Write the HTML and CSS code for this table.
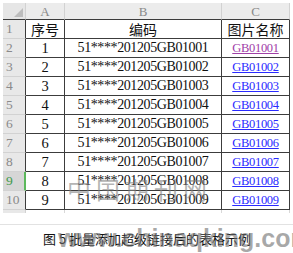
FILE: index.html
```html
<!DOCTYPE html>
<html lang="zh">
<head>
<meta charset="utf-8">
<link rel="stylesheet" href="styles.css">
</head>
<body>
<div class="page">
  <div class="sheet">
    <div class="corner"><svg width="9" height="9" viewBox="0 0 9 9"><polygon points="9,0 9,9 0,9" fill="#bdbdbd"/></svg></div>
    <div class="colh">A</div>
    <div class="colh">B</div>
    <div class="colh last">C</div>

    <div class="rowh">1</div><div class="cell cjk">序号</div><div class="cell cjk">编码</div><div class="cell cjk">图片名称</div>
    <div class="rowh">2</div><div class="cell">1</div><div class="cell code">51****201205GB01001</div><div class="cell"><a class="lnk visited">GB01001</a></div>
    <div class="rowh">3</div><div class="cell">2</div><div class="cell code">51****201205GB01002</div><div class="cell"><a class="lnk">GB01002</a></div>
    <div class="rowh">4</div><div class="cell">3</div><div class="cell code">51****201205GB01003</div><div class="cell"><a class="lnk">GB01003</a></div>
    <div class="rowh">5</div><div class="cell">4</div><div class="cell code">51****201205GB01004</div><div class="cell"><a class="lnk">GB01004</a></div>
    <div class="rowh">6</div><div class="cell">5</div><div class="cell code">51****201205GB01005</div><div class="cell"><a class="lnk">GB01005</a></div>
    <div class="rowh">7</div><div class="cell">6</div><div class="cell code">51****201205GB01006</div><div class="cell"><a class="lnk">GB01006</a></div>
    <div class="rowh">8</div><div class="cell">7</div><div class="cell code">51****201205GB01007</div><div class="cell"><a class="lnk">GB01007</a></div>
    <div class="rowh sel">9</div><div class="cell">8</div><div class="cell code">51****201205GB01008</div><div class="cell"><a class="lnk">GB01008</a></div>
    <div class="rowh">10</div><div class="cell">9</div><div class="cell code">51****201205GB01009</div><div class="cell"><a class="lnk">GB01009</a></div>

    <div class="strip-h"></div><div class="strip"></div><div class="strip"></div><div class="strip"></div>

    <div class="wm1">中国期刊网</div>
  </div>
  <div class="caption">
    <span>图 5 批量添加超级链接后的表格示例</span>
    <div class="wm2">www.chinaqking.com</div>
  </div>
</div>
</body>
</html>
```
FILE: styles.css
```css
html, body {
  margin: 0;
  padding: 0;
  background: #ffffff;
}
.page {
  width: 293px;
  height: 253px;
  overflow: hidden;
  position: relative;
  padding: 3px 0 0 3px;
  box-sizing: border-box;
}
.sheet {
  position: relative;
  display: grid;
  grid-template-columns: 23px 39px 157px 68px;
  grid-template-rows: 17px repeat(10, 19px) 3px;
  font-family: "Liberation Serif", "Noto Sans CJK SC", serif;
  font-size: 14.5px;
  color: #111;
}
.corner {
  background: #e6e6e6;
  border-right: 1px solid #d2d2d2;
  border-bottom: 1px solid #3c3c3c;
  box-sizing: border-box;
  display: flex;
  align-items: flex-end;
  justify-content: flex-end;
  padding: 0 2px 2px 0;
}
.colh {
  background: #ececec;
  color: #8a8a8a;
  font-size: 13px;
  border-right: 1px solid #d2d2d2;
  border-bottom: 1px solid #3c3c3c;
  box-sizing: border-box;
  display: flex;
  align-items: center;
  justify-content: center;
  line-height: 1;
}
.rowh {
  background: #e8e8e8;
  color: #8a8a8a;
  font-size: 13.5px;
  border-right: 1px solid #3c3c3c;
  border-bottom: 1px solid #d2d2d2;
  box-sizing: border-box;
  display: flex;
  align-items: center;
  padding-left: 3px;
  line-height: 1;
}
.rowh.sel {
  background: #d6d6d6;
  color: #3f9a4c;
  border-right: 2px solid #5cb85c;
}
.cell {
  border-right: 1px solid #3c3c3c;
  border-bottom: 1px solid #3c3c3c;
  box-sizing: border-box;
  display: flex;
  align-items: center;
  justify-content: center;
  white-space: nowrap;
  line-height: 1;
}
.code {
  font-size: 14px;
  letter-spacing: -0.4px;
}
.cjk {
  font-family: "Noto Sans CJK SC", sans-serif;
  font-size: 14px;
}
.lnk {
  font-size: 12.5px;
  color: #2a2aff;
  text-decoration: underline;
  letter-spacing: -0.3px;
}
.lnk.visited {
  color: #a040a8;
}
.strip-h {
  background: #e8e8e8;
  border-right: 1px solid #d2d2d2;
}
.strip {
  background: #ffffff;
  border-right: 1px solid #d8d8d8;
}
.wm1 {
  position: absolute;
  left: 64px;
  top: 174px;
  font-family: "Noto Sans CJK SC", sans-serif;
  font-size: 24px;
  letter-spacing: 5px;
  color: rgba(130, 130, 130, 0.6);
  line-height: 1;
  pointer-events: none;
}
.caption {
  position: relative;
  margin-top: 11px;
  margin-left: -3px;
  border-top: 1px solid #e2e2e2;
  height: 26px;
  display: flex;
  align-items: center;
  padding-left: 43px;
  font-family: "Noto Sans CJK SC", sans-serif;
  font-size: 13px;
  color: #111;
}
.wm2 {
  position: absolute;
  left: 58px;
  top: 1px;
  font-family: "Liberation Sans", sans-serif;
  font-weight: bold;
  font-size: 25px;
  color: rgba(110, 110, 110, 0.6);
  line-height: 1;
  white-space: nowrap;
}
```
